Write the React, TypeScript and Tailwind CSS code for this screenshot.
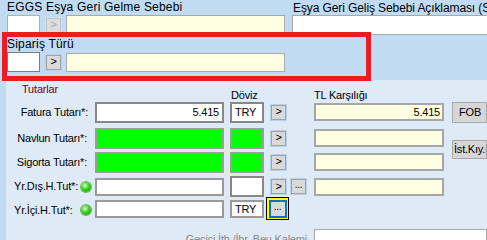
import * as React from "react";

const font = "font-['Liberation_Sans',Arial,sans-serif] text-[11px] tracking-[-0.2px] leading-[13px]";
const topLabel = "whitespace-nowrap text-[12px] leading-[14px] tracking-[0.2px]";

function ArrowBtn({ disabled = false }: { disabled?: boolean }) {
  return (
    <div
      className={
        "grid h-[15px] w-[15px] place-items-center border outline outline-1 " +
        (disabled
          ? "border-[#c4c4c4] bg-[#dcdcdc] text-[#a8a8a8] outline-[#d0e2f2]"
          : "border-[#a2a2a2] bg-[#dadada] text-black outline-[#b6d2ee]")
      }
    >
      <span className="-mt-px text-[11px] leading-none">&gt;</span>
    </div>
  );
}

function DotsBtn() {
  return (
    <div className="grid h-[15px] w-[15px] place-items-center border border-[#a2a2a2] bg-[#dadada] outline outline-1 outline-[#b6d2ee]">
      <span className="-mt-[3px] text-[10px] leading-none">...</span>
    </div>
  );
}

function Dot() {
  return (
    <span className="inline-block h-[10px] w-[10px] rounded-full bg-[radial-gradient(circle_at_40%_35%,#d8ffc8_0%,#3ad21e_45%,#0e8a00_100%)] shadow-[0_0_0_1px_#6fb860]" />
  );
}

type BoxProps = { className?: string; children?: React.ReactNode };

function Cream({ className = "" }: BoxProps) {
  return <div className={"h-[18px] w-[130px] border-2 border-[#a7a7a7] bg-[#ffffe1] " + className} />;
}

function Green({ className = "" }: BoxProps) {
  return <div className={"h-[21px] border-2 border-[#9c9c9c] bg-[#00ff00] " + className} />;
}

function White({ className = "", children }: BoxProps) {
  return (
    <div className={"flex items-center border-2 border-[#9a9a9a] bg-white px-[3px] " + className}>
      {children}
    </div>
  );
}

const cols = "grid grid-cols-[89px_135px_41px_20px_23px_138px_1fr]";

export default function App() {
  return (
    <div className={"relative h-[240px] w-[487px] overflow-hidden bg-[#c1dbf3] text-black " + font}>
      {/* top block */}
      <div className="flex h-[80px]">
        <div className="w-[292px] pl-[7px]">
          <div className={topLabel}>EGGS Eşya Geri Gelme Sebebi</div>
          <div className="mt-px flex items-center">
            <div className="h-[20px] w-[33px] border border-[#b0b0b0] bg-white" />
            <div className="ml-[6px]">
              <ArrowBtn disabled />
            </div>
            <div className="ml-[5px] h-[20px] w-[219px] border border-[#a9a9a9] bg-[#ffffe1]" />
          </div>
          <div className={topLabel + " mt-[2px]"}>Sipariş Türü</div>
          <div className="mt-[1px] flex items-center">
            <div className="h-[20px] w-[33px] border border-[#7c7c7c] bg-white" />
            <div className="ml-[6px]">
              <ArrowBtn />
            </div>
            <div className="ml-[5px] h-[19px] w-[219px] border border-[#a9a9a9] bg-[#ffffe1]" />
          </div>
        </div>
        <div className="min-w-0 flex-1 pt-[1px]">
          <div className="whitespace-nowrap pl-[1px] text-[12px] leading-[14px] tracking-[-0.1px]">Eşya Geri Geliş Sebebi Açıklaması (Sebep</div>
          <div className="h-[20px] border border-r-0 border-[#a9a9a9] bg-white" />
        </div>
      </div>

      {/* lower block */}
      <div className="h-[160px] border-l-[6px] border-[#c1dbf3] bg-[#dfeaf7]">
        <div className={cols + " h-[21px]"}>
          <div className="col-span-2 pl-[16px] pt-[3px] text-[#7a0000]">Tutarlar</div>
          <div className="pl-px pt-[9px]">Döviz</div>
          <div />
          <div />
          <div className="pt-[9px]">TL Karşılığı</div>
        </div>

        <div className={cols + " h-[22px] items-center"}>
          <div className="pr-[7px] text-right">Fatura Tutarı*:</div>
          <White className="h-[21px] w-[129px] justify-end border-[#888]">5.415</White>
          <White className="h-[21px] w-[34px] border-[#888]">TRY</White>
          <ArrowBtn />
          <div />
          <div className="flex h-[18px] w-[130px] items-center justify-end border-2 border-[#a7a7a7] bg-[#ffffe1] px-[2px]">5.415</div>
          <div className="flex h-[21px] items-center whitespace-nowrap border border-[#a9a9a9] bg-[#d6d6d6] pl-[6px]">FOB</div>
        </div>

        <div className={cols + " mt-[4px] h-[22px] items-center"}>
          <div className="pr-[8px] text-right">Navlun Tutarı*:</div>
          <Green className="w-[129px]" />
          <Green className="w-[34px]" />
          <ArrowBtn />
          <div />
          <Cream />
          <div />
        </div>

        <div className={cols + " mt-[2px] h-[22px] items-center"}>
          <div className="pr-[8px] text-right">Sigorta Tutarı*:</div>
          <Green className="w-[129px]" />
          <Green className="w-[34px]" />
          <ArrowBtn />
          <div />
          <Cream />
          <div className="-mt-[26px] flex h-[19px] items-center overflow-hidden whitespace-nowrap border border-[#a9a9a9] bg-[#d6d6d6] pl-[1px]">İst.Kıy.H</div>
        </div>

        <div className={cols + " mt-[3px] h-[21px] items-center"}>
          <div className="flex items-center pl-[8px]">
            <span className="w-[67px] whitespace-nowrap">Yr.Dış.H.Tut*:</span>
            <Dot />
          </div>
          <White className="h-[18px] w-[129px]" />
          <White className="h-[21px] w-[34px] border-[#888]" />
          <ArrowBtn />
          <DotsBtn />
          <Cream />
          <div />
        </div>

        <div className={cols + " h-[24px] items-start"}>
          <div className="mt-[4px] flex h-[18px] items-center pl-[8px]">
            <span className="w-[67px] whitespace-nowrap">Yr.İçi.H.Tut*:</span>
            <Dot />
          </div>
          <White className="mt-[3px] h-[18px] w-[129px]" />
          <White className="mt-[3px] h-[18px] w-[34px] border-[#9a9a9a]">TRY</White>
          <div className="-ml-[5px] grid h-[23px] w-[23px] place-items-center border border-black bg-[#ffff00]">
            <div className="grid h-[18px] w-[18px] place-items-center border-2 border-[#0a6fd6] bg-[#dadada]">
              <span className="-mt-[3px] text-[10px] leading-none">...</span>
            </div>
          </div>
          <div />
          <div />
          <div />
        </div>

        <div className={cols + " mt-[8px] h-[20px] items-start"}>
          <div />
          <div className="col-span-4 whitespace-nowrap pr-[7px] pt-[4px] text-right text-[#8a8a8a]">Geçici İth./İhr. Beu Kalemi</div>
          <div className="col-span-2 h-[20px] border border-[#a9a9a9] bg-white" />
        </div>
      </div>

      {/* annotation frame */}
      <div className="pointer-events-none absolute left-[2px] top-[32px] h-[49px] w-[369px] border-[5px] border-[#ed1c24]" />
    </div>
  );
}
